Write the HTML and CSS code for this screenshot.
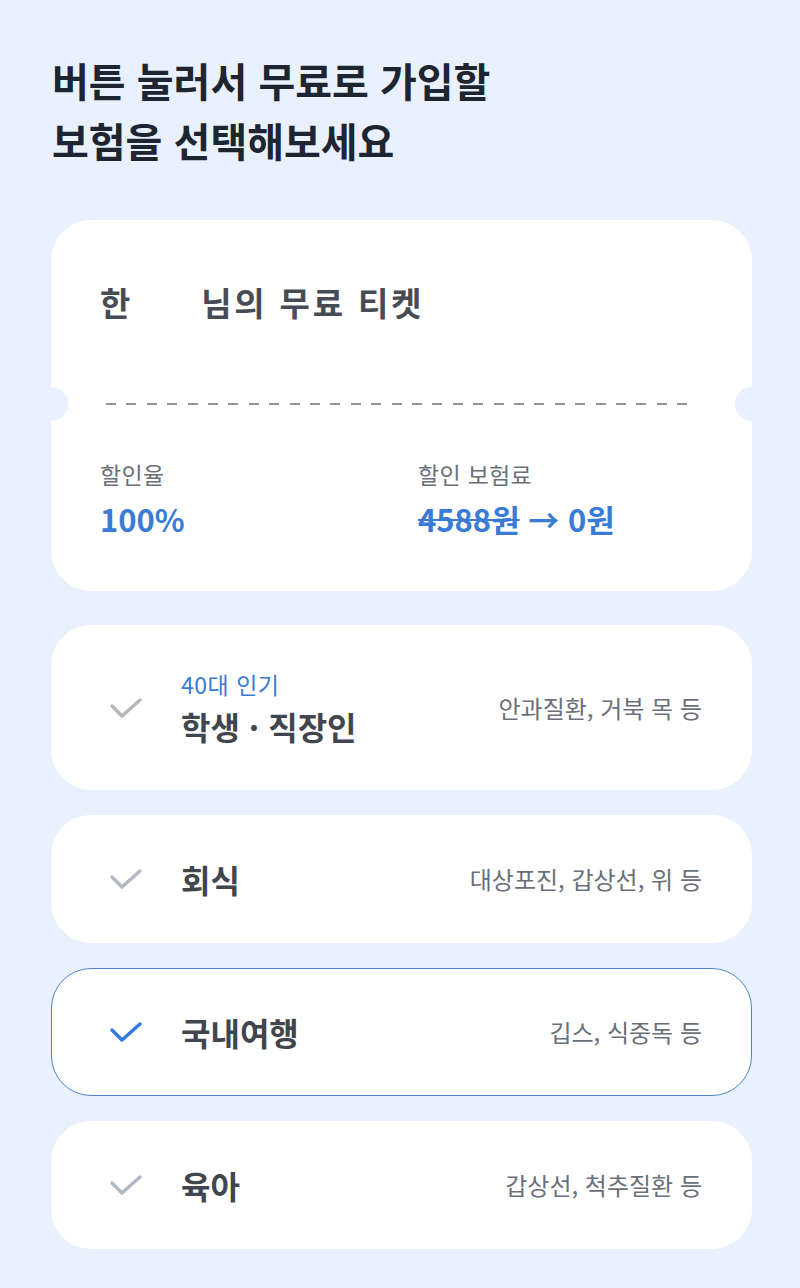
FILE: index.html
```html
<!DOCTYPE html>
<html lang="ko">
<head>
  <meta charset="UTF-8" />
  <meta name="viewport" content="width=device-width, initial-scale=1.0"/>
  <title>무료 보험 선택</title>
  <link rel="stylesheet" href="styles.css">
</head>
<body>
  <div class="page">
    <h1 class="heading">버튼 눌러서 무료로 가입할<br>보험을 선택해보세요</h1>

    <div class="ticket">
      <div class="ticket-top">
        <div class="ticket-title">한<span class="name-mask"></span>님의 무료 티켓</div>
      </div>
      <div class="ticket-divider"></div>
      <div class="ticket-bottom">
        <div class="stat">
          <div class="label">할인율</div>
          <div class="value">100%</div>
        </div>
        <div class="stat">
          <div class="label">할인 보험료</div>
          <div class="value"><span class="old-price">4588원</span> → 0원</div>
        </div>
      </div>
    </div>

    <div class="option tall">
      <svg class="check" viewBox="0 0 34 22"><polyline points="3,9 13,19 31,3"/></svg>
      <div class="option-main">
        <div class="option-tag">40대 인기</div>
        <div class="option-title">학생 · 직장인</div>
      </div>
      <div class="option-desc">안과질환, 거북 목 등</div>
    </div>

    <div class="option">
      <svg class="check" viewBox="0 0 34 22"><polyline points="3,9 13,19 31,3"/></svg>
      <div class="option-main">
        <div class="option-title">회식</div>
      </div>
      <div class="option-desc">대상포진, 갑상선, 위 등</div>
    </div>

    <div class="option selected">
      <svg class="check" viewBox="0 0 34 22"><polyline points="3,9 13,19 31,3"/></svg>
      <div class="option-main">
        <div class="option-title">국내여행</div>
      </div>
      <div class="option-desc">깁스, 식중독 등</div>
    </div>

    <div class="option">
      <svg class="check" viewBox="0 0 34 22"><polyline points="3,9 13,19 31,3"/></svg>
      <div class="option-main">
        <div class="option-title">육아</div>
      </div>
      <div class="option-desc">갑상선, 척추질환 등</div>
    </div>
  </div>
</body>
</html>
```

FILE: styles.css
```css
body {
  margin: 0;
  background: #e8f1fd;
  font-family: "Noto Sans CJK KR", "Noto Sans", sans-serif;
  color: #41464e;
}
.page {
  padding: 50px 48px 0 51px;
}
.heading {
  margin: 0 0 50px 1px;
  font-size: 40px;
  line-height: 60px;
  font-weight: 700;
  color: #1e2530;
}

/* ticket */
.ticket {
  background: #fff;
  border-radius: 40px;
}
.ticket-top {
  height: 184px;
  box-sizing: border-box;
  padding: 60px 49px 0;
}
.ticket-title {
  font-size: 33px;
  line-height: 44px;
  font-weight: 700;
  color: #474c54;
  letter-spacing: 2.8px;
}
.name-mask {
  display: inline-block;
  width: 68px;
}
.ticket-divider {
  position: relative;
  height: 2px;
  margin: -1px 55px 0;
  background: repeating-linear-gradient(to right, #8e949b 0 10px, transparent 10px 20.4px);
}
.ticket-divider::before,
.ticket-divider::after {
  content: "";
  position: absolute;
  top: -16px;
  width: 34px;
  height: 34px;
  border-radius: 50%;
  background: #e8f1fd;
}
.ticket-divider::before { left: -72px; }
.ticket-divider::after { right: -72px; }
.ticket-bottom {
  display: grid;
  grid-template-columns: 318px 1fr;
  padding: 54px 49px 53px;
}
.label {
  font-size: 23px;
  line-height: 30px;
  color: #6b7078;
  letter-spacing: 0.3px;
}
.value {
  margin-top: 11px;
  font-size: 31px;
  line-height: 38px;
  font-weight: 600;
  color: #3a7bd5;
}
.old-price {
  text-decoration: line-through;
  text-decoration-thickness: 2px;
}

/* options */
.option {
  display: flex;
  align-items: center;
  height: 128px;
  box-sizing: border-box;
  margin-top: 25px;
  padding: 0 49px 0 57px;
  background: #fff;
  border: 1.5px solid transparent;
  border-radius: 40px;
}
.option.tall {
  height: 165px;
  margin-top: 34px;
}
.option.selected {
  border-color: #4a86c5;
}
.check {
  width: 34px;
  height: 22px;
  flex: none;
  margin-right: 38px;
  fill: none;
  stroke: #b3b9c1;
  stroke-width: 3.5;
  stroke-linecap: round;
  stroke-linejoin: round;
}
.selected .check {
  stroke: #3478e0;
}
.option-main {
  flex: 1;
}
.option-tag {
  font-size: 23px;
  line-height: 28px;
  color: #3a7bd5;
  margin-bottom: 8px;
  letter-spacing: 0.5px;
}
.option-title {
  font-size: 32px;
  line-height: 40px;
  font-weight: 700;
  color: #41464e;
}
.option-desc {
  font-size: 24px;
  line-height: 32px;
  color: #6b7078;
}
```
